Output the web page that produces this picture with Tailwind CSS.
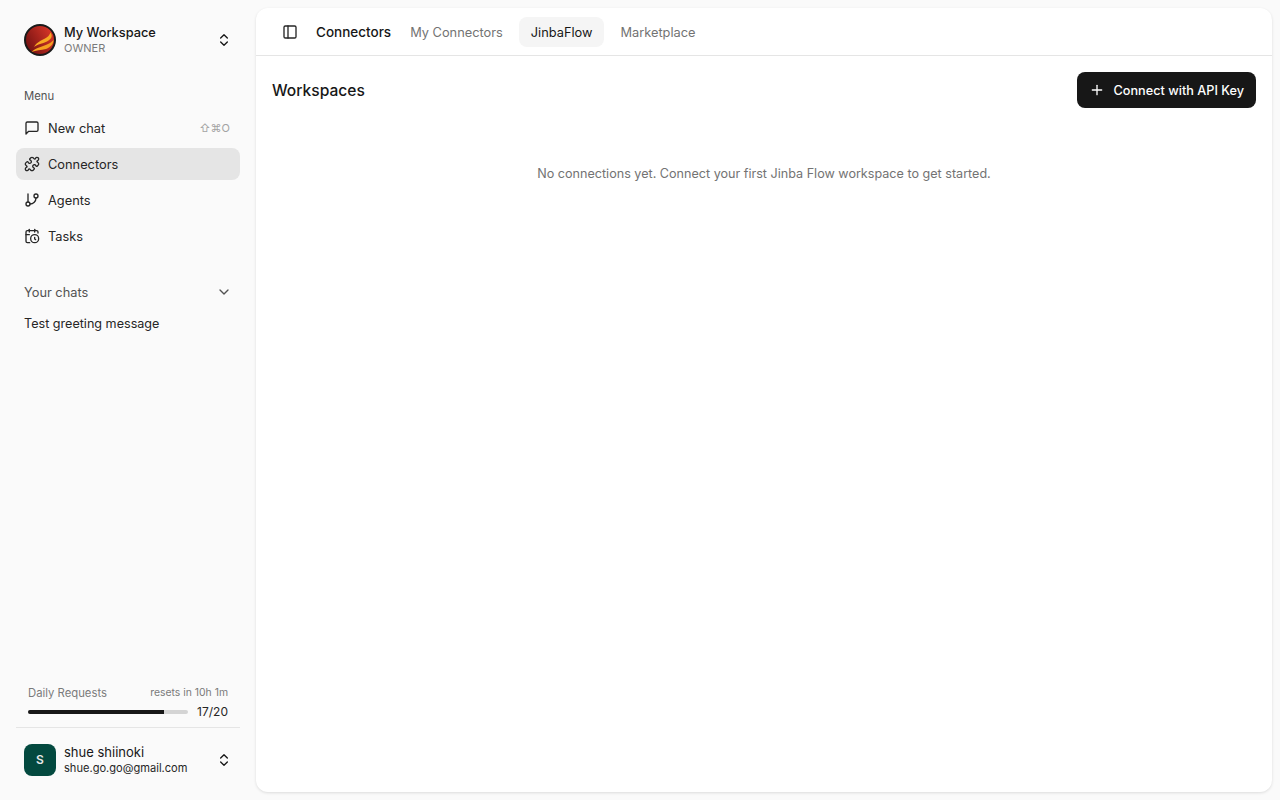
<!DOCTYPE html>
<html lang="en">
<head>
    <meta charset="UTF-8">
    <title>Connectors</title>
    <script src="https://cdn.jsdelivr.net/npm/@tailwindcss/browser@4"></script>
</head>
<body class="bg-[#fafafa] font-['Inter',sans-serif] text-[#171717]">
    <div class="flex h-[800px] w-[1280px] overflow-hidden">
        <!-- Sidebar -->
        <aside class="flex w-[256px] shrink-0 flex-col">
            <!-- Workspace switcher -->
            <div class="mx-2 mt-2 flex h-[64px] items-center px-4">
                <svg class="mr-2 h-8 w-8 shrink-0" viewBox="0 0 32 32">
                    <defs>
                        <linearGradient id="ball" x1="0" y1="0.8" x2="1" y2="0.2">
                            <stop offset="0" stop-color="#6d0f10"/>
                            <stop offset="1" stop-color="#e0392a"/>
                        </linearGradient>
                    </defs>
                    <circle cx="16" cy="16" r="15" fill="url(#ball)" stroke="#1a1a1a" stroke-width="2"/>
                    <path d="M10 23C13 18 17 16.500 21 14.500C24 13 25.500 11 26.500 8.500C29 12 27.500 15 23 17.500C18 20 14 20 10 23z" fill="#f7a823"/>
                    <path d="M7.500 28C12 23.500 18 23 23 20.500C26 19 28 18 29.500 16C29.500 20 27 23 22 25C17 26.500 12 26 7.500 28z" fill="#f5a020"/>
                </svg>
                <div class="flex min-w-0 flex-1 flex-col">
                    <span class="-mb-[2px] text-[12.800px] leading-[18px] font-medium">My Workspace</span>
                    <span class="text-[11px] leading-4 text-[#7a7a7a]">OWNER</span>
                </div>
                <svg class="h-4 w-4 text-[#171717]" viewBox="0 0 24 24" fill="none" stroke="currentColor" stroke-width="2" stroke-linecap="round" stroke-linejoin="round"><path d="m7 15 5 5 5-5"/><path d="m7 9 5-5 5 5"/></svg>
            </div>

            <!-- Menu -->
            <div class="mt-[14px] px-4">
                <div class="flex h-[20px] items-center px-2 pt-px text-[11.300px] text-[#525252]">Menu</div>
                <nav class="mt-[6px] flex flex-col gap-1">
                    <a class="flex h-8 items-center gap-2 rounded-lg px-2 text-[12.800px] text-[#262626]">
                        <svg class="h-4 w-4 shrink-0" viewBox="0 0 24 24" fill="none" stroke="currentColor" stroke-width="2" stroke-linecap="round" stroke-linejoin="round"><path d="M21 15a2 2 0 0 1-2 2H7l-4 4V5a2 2 0 0 1 2-2h14a2 2 0 0 1 2 2z"/></svg>
                        <span class="flex-1 pt-[2px]">New chat</span>
                        <span class="mr-[2px] text-[11px] text-[#a3a3a3]">⇧⌘O</span>
                    </a>
                    <a class="flex h-8 items-center gap-2 rounded-lg bg-[#e5e5e5] px-2 text-[12.800px] text-[#262626]">
                        <svg class="h-4 w-4 shrink-0" viewBox="0 0 24 24" fill="none" stroke="currentColor" stroke-width="2" stroke-linecap="round" stroke-linejoin="round"><path d="M19.439 7.85c-.049.322.059.648.289.878l1.568 1.568c.47.47.706 1.087.706 1.704s-.235 1.233-.706 1.704l-1.611 1.611a.98.98 0 0 1-.837.276c-.47-.07-.802-.48-.968-.925a2.501 2.501 0 1 0-3.214 3.214c.446.166.855.497.925.968a.979.979 0 0 1-.276.837l-1.61 1.61a2.404 2.404 0 0 1-1.705.707 2.402 2.402 0 0 1-1.704-.706l-1.568-1.568a1.026 1.026 0 0 0-.877-.29c-.493.074-.84.504-1.02.968a2.5 2.5 0 1 1-3.237-3.237c.464-.18.894-.527.967-1.02a1.026 1.026 0 0 0-.289-.877l-1.568-1.568A2.402 2.402 0 0 1 1.998 12c0-.617.236-1.234.706-1.704L4.23 8.77c.24-.24.581-.353.917-.303.515.077.877.528 1.073 1.01a2.5 2.5 0 1 0 3.259-3.259c-.482-.196-.933-.558-1.01-1.073-.05-.336.062-.676.303-.917l1.525-1.525A2.402 2.402 0 0 1 12 1.998c.617 0 1.234.236 1.704.706l1.568 1.568c.23.23.556.338.877.29.493-.074.84-.504 1.02-.968a2.5 2.5 0 1 1 3.237 3.237c-.464.18-.894.527-.967 1.02Z"/></svg>
                        <span class="pt-[2px]">Connectors</span>
                    </a>
                    <a class="flex h-8 items-center gap-2 rounded-lg px-2 text-[12.800px] text-[#262626]">
                        <svg class="h-4 w-4 shrink-0" viewBox="0 0 24 24" fill="none" stroke="currentColor" stroke-width="2" stroke-linecap="round" stroke-linejoin="round"><line x1="6" x2="6" y1="3" y2="15"/><circle cx="18" cy="6" r="3"/><circle cx="6" cy="18" r="3"/><path d="M18 9a9 9 0 0 1-9 9"/></svg>
                        <span class="pt-[2px]">Agents</span>
                    </a>
                    <a class="flex h-8 items-center gap-2 rounded-lg px-2 text-[12.800px] text-[#262626]">
                        <svg class="h-4 w-4 shrink-0" viewBox="0 0 24 24" fill="none" stroke="currentColor" stroke-width="2" stroke-linecap="round" stroke-linejoin="round"><path d="M21 7.5V6a2 2 0 0 0-2-2H5a2 2 0 0 0-2 2v14a2 2 0 0 0 2 2h3.500"/><path d="M16 2v4"/><path d="M8 2v4"/><path d="M3 10h5"/><path d="M17.500 17.500 16 16.300V14"/><circle cx="16" cy="16" r="6"/></svg>
                        <span class="pt-[2px]">Tasks</span>
                    </a>
                </nav>
            </div>

            <!-- Chats -->
            <div class="mt-[30px] px-4">
                <div class="flex h-5 items-center justify-between px-2 text-[12.800px] text-[#525252]">
                    <span class="pt-[2px]">Your chats</span>
                    <svg class="h-4 w-4" viewBox="0 0 24 24" fill="none" stroke="currentColor" stroke-width="2" stroke-linecap="round" stroke-linejoin="round"><path d="m6 9 6 6 6-6"/></svg>
                </div>
                <div class="mt-[14px] px-2 text-[12.600px] leading-4 text-[#262626]">Test greeting message</div>
            </div>

            <!-- Usage -->
            <div class="mt-auto px-4 pb-[9px]">
                <div class="px-3 pb-[7px]">
                    <div class="flex items-center justify-between leading-4">
                        <span class="text-[11.300px] text-[#7a7a7a]">Daily Requests</span>
                        <span class="text-[10.400px] text-[#7a7a7a]">resets in 10h 1m</span>
                    </div>
                    <div class="mt-[3px] flex items-center gap-[9px]">
                        <div class="h-1 flex-1 overflow-hidden rounded-full bg-[#d4d4d4]">
                            <div class="h-full bg-[#171717]" style="width: 85%"></div>
                        </div>
                        <span class="text-[12px] leading-4 text-[#262626]">17/20</span>
                    </div>
                </div>
                <!-- User -->
                <div class="flex h-[64px] items-center border-t border-[#e5e5e5] px-2">
                    <div class="mr-2 flex h-8 w-8 shrink-0 items-center justify-center rounded-lg bg-[#03493f] text-xs font-semibold text-[#e8e8e8]">S</div>
                    <div class="flex min-w-0 flex-1 flex-col">
                        <span class="text-[13px] leading-4 text-[#171717]">shue shiinoki</span>
                        <span class="text-[11.100px] leading-4 text-[#262626]">shue.go.go@gmail.com</span>
                    </div>
                    <svg class="h-4 w-4" viewBox="0 0 24 24" fill="none" stroke="currentColor" stroke-width="2" stroke-linecap="round" stroke-linejoin="round"><path d="m7 15 5 5 5-5"/><path d="m7 9 5-5 5 5"/></svg>
                </div>
            </div>
        </aside>

        <!-- Main -->
        <main class="my-2 mr-2 flex flex-1 flex-col rounded-xl bg-white shadow-[0_1px_3px_rgba(0,0,0,0.12)]">
            <header class="flex h-12 shrink-0 items-center border-b border-[#e5e5e5] pt-px pl-[26px]">
                <svg class="h-4 w-4 text-[#262626]" viewBox="0 0 24 24" fill="none" stroke="currentColor" stroke-width="2" stroke-linecap="round" stroke-linejoin="round"><rect width="18" height="18" x="3" y="3" rx="2"/><path d="M9 3v18"/></svg>
                <span class="ml-[18px] pt-px text-[13.500px] font-medium text-[#171717]">Connectors</span>
                <div class="ml-[7px] flex items-center gap-1 text-[12.800px]">
                    <span class="flex h-[30px] items-center rounded-lg px-3 pt-[2px] text-[#737373]">My Connectors</span>
                    <span class="flex h-[30px] items-center rounded-lg bg-[#f5f5f5] px-3 pt-[2px] text-[#171717]">JinbaFlow</span>
                    <span class="flex h-[30px] items-center rounded-lg px-3 pt-[2px] text-[#737373]">Marketplace</span>
                </div>
            </header>
            <div class="flex-1 px-4 pt-4">
                <div class="flex items-center justify-between">
                    <h2 class="pt-[2px] text-[15.600px] font-medium text-[#171717]">Workspaces</h2>
                    <button class="flex h-9 items-center gap-[9px] rounded-lg bg-[#171717] px-3 text-[12.700px] font-medium text-white">
                        <svg class="h-4 w-4" viewBox="0 0 24 24" fill="none" stroke="currentColor" stroke-width="2" stroke-linecap="round" stroke-linejoin="round"><path d="M5 12h14"/><path d="M12 5v14"/></svg>
                        <span class="pt-[2px]">Connect with API Key</span>
                    </button>
                </div>
                <p class="mt-[58px] text-center text-[12.600px] leading-4 text-[#737373]">No connections yet. Connect your first Jinba Flow workspace to get started.</p>
            </div>
        </main>
    </div>
</body>
</html>
